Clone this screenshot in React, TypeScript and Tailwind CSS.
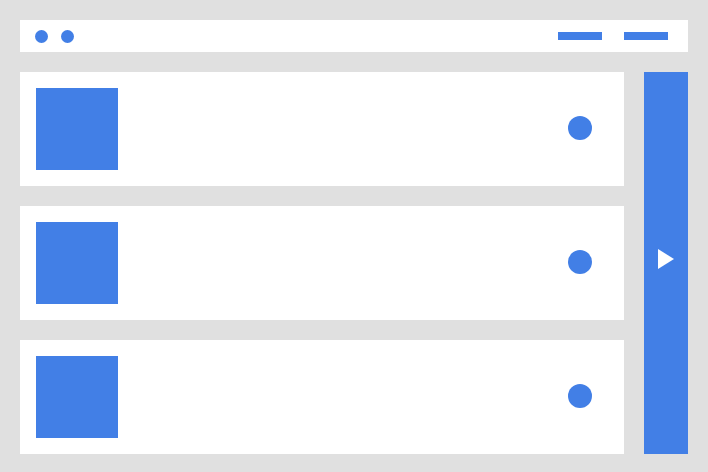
export default function App() {
  return (
    <div className="flex h-[472px] w-[708px] flex-col gap-5 bg-[#e0e0e0] px-5 pb-[18px] pt-5">
      <header className="flex h-8 shrink-0 items-center bg-white pl-[15px] pr-5">
        <div className="flex gap-[13px]">
          <span className="h-[13px] w-[13px] rounded-full bg-[#427fe6]" />
          <span className="h-[13px] w-[13px] rounded-full bg-[#427fe6]" />
        </div>
        <div className="ml-auto flex gap-[22px]">
          <span className="h-2 w-11 bg-[#427fe6]" />
          <span className="h-2 w-11 bg-[#427fe6]" />
        </div>
      </header>

      <main className="flex shrink-0 gap-5">
        <div className="flex w-[604px] flex-col gap-5">
          {[0, 1, 2].map((i) => (
            <div key={i} className="flex h-[114px] items-center bg-white pl-4 pr-8">
              <div className="h-[82px] w-[82px] bg-[#427fe6]" />
              <div className="mb-[2px] ml-auto h-6 w-6 rounded-full bg-[#427fe6]" />
            </div>
          ))}
        </div>
        <div className="flex h-[382px] w-11 items-center bg-[#427fe6] pl-[14px]">
          <svg className="mb-2" width="16" height="20" viewBox="0 0 16 20">
            <polygon points="0,0 16,10 0,20" fill="#ffffff" />
          </svg>
        </div>
      </main>
    </div>
  );
}
